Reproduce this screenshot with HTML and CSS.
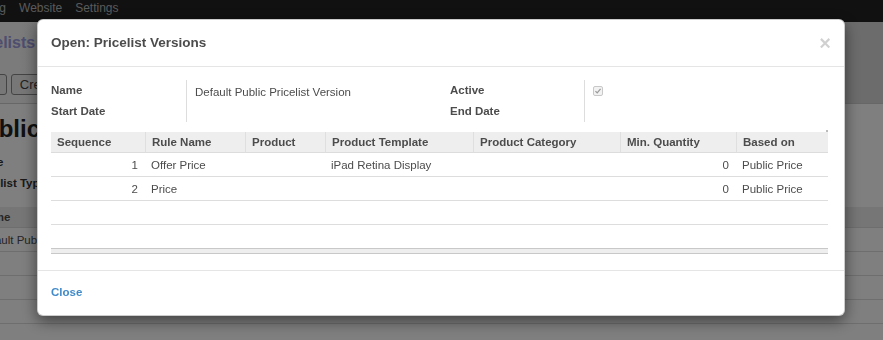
FILE: index.html
```html
<!DOCTYPE html>
<html lang="en">
<head>
    <meta charset="UTF-8">
    <meta name="viewport" content="width=device-width, initial-scale=1.0">
    <title>Pricelists</title>
    <link rel="stylesheet" href="styles.css">
</head>
<body>
    <div class="page">
        <nav class="topbar">
            <ul>
                <li>Reporting</li>
                <li>Website</li>
                <li>Settings</li>
            </ul>
        </nav>

        <div class="control-panel">
            <h2 class="breadcrumb">Pricelists</h2>
            <div class="cp-buttons">
                <button>Import</button>
                <button>Create</button>
            </div>
        </div>

        <div class="sheet">
            <h1>Public Pricelist</h1>
            <div class="sheet-fields">
                <div class="sheet-field">Name</div>
                <div class="sheet-field">Pricelist Type</div>
            </div>
            <table class="sheet-list">
                <thead>
                    <tr><th>Name</th></tr>
                </thead>
                <tbody>
                    <tr><td>Default Public Pricelist Version</td></tr>
                    <tr><td></td></tr>
                    <tr><td></td></tr>
                    <tr><td></td></tr>
                </tbody>
            </table>
        </div>
    </div>

    <div class="backdrop"></div>

    <div class="modal">
        <div class="modal-header">
            <h4 class="modal-title">Open: Pricelist Versions</h4>
            <span class="close">&times;</span>
        </div>

        <div class="modal-body">
            <div class="form-grid">
                <div class="form-label">Name</div>
                <div class="form-value">Default Public Pricelist Version</div>
                <div class="form-label">Active</div>
                <div class="form-value">
                    <span class="checkbox">
                        <svg viewBox="0 0 10 10" width="8" height="8"><path d="M1.8 5.2 L4 7.4 L8.2 2.4" fill="none" stroke="#9a9a9a" stroke-width="1.6"/></svg>
                    </span>
                </div>
                <div class="form-label">Start Date</div>
                <div class="form-value"></div>
                <div class="form-label">End Date</div>
                <div class="form-value"></div>
            </div>

            <div class="list-wrap">
                <table class="list">
                    <colgroup>
                        <col style="width: 94px">
                        <col style="width: 100px">
                        <col style="width: 80px">
                        <col style="width: 148px">
                        <col style="width: 147px">
                        <col style="width: 116px">
                        <col>
                    </colgroup>
                    <thead>
                        <tr>
                            <th>Sequence</th>
                            <th>Rule Name</th>
                            <th>Product</th>
                            <th>Product Template</th>
                            <th>Product Category</th>
                            <th>Min. Quantity</th>
                            <th>Based on</th>
                        </tr>
                    </thead>
                    <tbody>
                        <tr>
                            <td class="num">1</td>
                            <td>Offer Price</td>
                            <td></td>
                            <td>iPad Retina Display</td>
                            <td></td>
                            <td class="num">0</td>
                            <td>Public Price</td>
                        </tr>
                        <tr>
                            <td class="num">2</td>
                            <td>Price</td>
                            <td></td>
                            <td></td>
                            <td></td>
                            <td class="num">0</td>
                            <td>Public Price</td>
                        </tr>
                        <tr><td></td><td></td><td></td><td></td><td></td><td></td><td></td></tr>
                        <tr><td></td><td></td><td></td><td></td><td></td><td></td><td></td></tr>
                    </tbody>
                    <tfoot>
                        <tr><td colspan="7"></td></tr>
                    </tfoot>
                </table>
            </div>
        </div>

        <div class="modal-footer">
            <a class="close-link" href="#">Close</a>
        </div>
    </div>
</body>
</html>
```

FILE: styles.css
```css
* {
    box-sizing: border-box;
}
body {
    margin: 0;
    height: 340px;
    overflow: hidden;
    font-family: "Liberation Sans", Arial, sans-serif;
    font-size: 11.5px;
    color: #4c4c4c;
    background-color: white;
}

/* page behind the dialog */
.topbar {
    height: 22px;
    background-color: #222;
}
.topbar ul {
    list-style: none;
    display: flex;
    gap: 13px;
    margin: 0 0 0 -46px;
    padding: 0;
    font-size: 12px;
    line-height: 16px;
    color: #b4b4b4;
}
.control-panel {
    height: 82px;
    padding-top: 11px;
    border-bottom: 1px solid #cfcfcf;
    background: linear-gradient(to right, #f7f7f7, #d9d9d9 60%);
}
.breadcrumb {
    margin: 0 0 0 -36px;
    font-size: 16px;
    font-weight: bold;
    line-height: 20px;
    color: #9c9ce0;
}
.cp-buttons {
    display: flex;
    gap: 4px;
    margin: 21px 0 0 -48px;
}
.cp-buttons button {
    height: 21px;
    padding: 0 8px;
    font: inherit;
    font-size: 13px;
    color: #444;
    background-color: #efefef;
    border: 1px solid #888;
    border-radius: 3px;
}
.sheet {
    margin-left: -28px;
}
.sheet h1 {
    margin: 10px 0 0 -4px;
    font-size: 24px;
    line-height: 30px;
    color: #222;
}
.sheet-fields {
    margin-top: 8px;
}
.sheet-field {
    line-height: 21px;
    font-weight: bold;
    color: #333;
}
.sheet-list {
    width: 920px;
    margin-top: 13px;
    border-spacing: 0;
}
.sheet-list th {
    height: 21px;
    padding: 0 7px;
    text-align: left;
    background-color: #ececec;
    border-bottom: 1px solid #ddd;
}
.sheet-list td {
    height: 24px;
    padding: 0 5px;
    border-bottom: 1px solid #ddd;
}

/* dialog */
.backdrop {
    position: fixed;
    inset: 0;
    background-color: rgba(0,0,0,0.5);
}
.modal {
    position: fixed;
    top: 19px;
    left: 37px;
    width: 808px;
    background-color: white;
    border: 1px solid rgba(0,0,0,0.2);
    border-radius: 6px;
    box-shadow: 0 5px 15px rgba(0,0,0,0.5);
}
.modal-header {
    display: flex;
    justify-content: space-between;
    align-items: center;
    padding: 15px 13px 15px 13px;
    border-bottom: 1px solid #e5e5e5;
}
.modal-title {
    margin: 0;
    font-size: 13.5px;
    line-height: 16px;
    font-weight: bold;
    color: #4c4c4c;
}
.close {
    font-size: 20px;
    font-weight: bold;
    line-height: 16px;
    color: #000;
    opacity: 0.18;
}
.modal-body {
    padding: 13px 16px 16px 13px;
}
.form-grid {
    display: grid;
    grid-template-columns: 136px 263px 135px 1fr;
    grid-auto-rows: 21px;
}
.form-label {
    font-weight: bold;
    line-height: 21px;
    border-right: 1px solid #ddd;
}
.form-value {
    padding: 2px 0 0 8px;
    line-height: 21px;
}
.checkbox {
    display: inline-flex;
    align-items: center;
    justify-content: center;
    width: 10px;
    height: 10px;
    margin-top: 4px;
    vertical-align: top;
    background-color: #f2f2f2;
    border: 1px solid #c8c8c8;
    border-radius: 2px;
}
.list-wrap {
    position: relative;
    margin-top: 10px;
}
.list-wrap:after {
    content: "";
    position: absolute;
    top: -2px;
    right: 0;
    width: 2px;
    height: 2px;
    background-color: #bbb;
}
.list {
    width: 100%;
    table-layout: fixed;
    border-spacing: 0;
}
.list th {
    height: 21px;
    padding: 0 6px;
    text-align: left;
    font-weight: bold;
    white-space: nowrap;
    overflow: hidden;
    background-color: #eee;
    border-bottom: 1px solid #dcdcdc;
}
.list th + th {
    border-left: 1px solid #dfdfdf;
}
.list td {
    height: 24px;
    padding: 0 6px;
    white-space: nowrap;
    border-bottom: 1px solid #ddd;
}
.list td.num {
    text-align: right;
    padding-right: 7px;
}
.list tbody tr:last-child td {
    border-bottom-color: #c8c8c8;
}
.list tfoot td {
    height: 5px;
    padding: 0;
    background-color: #eee;
    border-bottom: 1px solid #c8c8c8;
}
.modal-footer {
    padding: 14px 13px 15px;
    border-top: 1px solid #e5e5e5;
}
.close-link {
    font-weight: bold;
    line-height: 15px;
    color: #428bca;
    text-decoration: none;
}
```
